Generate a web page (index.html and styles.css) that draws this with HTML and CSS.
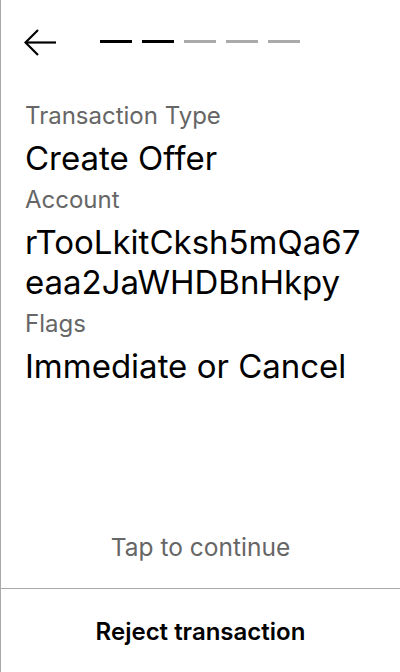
FILE: index.html
```html
<!DOCTYPE html>
<html lang="en">
<head>
<meta charset="utf-8">
<link rel="stylesheet" href="styles.css">
</head>
<body>
<div class="screen">
  <header class="header">
    <button class="back" aria-label="Back">
      <svg width="34" height="28" viewBox="0 0 34 28" fill="none" stroke="#000" stroke-width="2.2">
        <path d="M32 13.5H1.5"/>
        <path d="M14 1L1.5 13.5L14 26"/>
      </svg>
    </button>
    <div class="steps">
      <span class="step done"></span>
      <span class="step done"></span>
      <span class="step"></span>
      <span class="step"></span>
      <span class="step"></span>
    </div>
  </header>
  <main class="content">
    <div class="label">Transaction Type</div>
    <div class="value">Create Offer</div>
    <div class="label">Account</div>
    <div class="value">rTooLkitCksh5mQa67<br>eaa2JaWHDBnHkpy</div>
    <div class="label">Flags</div>
    <div class="value">Immediate or Cancel</div>
  </main>
  <div class="tap">Tap to continue</div>
  <div class="reject">Reject transaction</div>
</div>
</body>
</html>
```
FILE: styles.css
```css
* { box-sizing: border-box; }
html, body { margin: 0; padding: 0; background: #fff; }
body { font-family: Inter, "Noto Sans", sans-serif; color: #000; }
.screen {
  width: 400px;
  height: 672px;
  border-left: 1px solid #aaa;
  display: flex;
  flex-direction: column;
}
.header {
  display: flex;
  align-items: center;
  height: 63px;
  padding: 22px 0 0 23px;
}
.back {
  background: none;
  border: 0;
  padding: 0;
  margin: 0;
  width: 34px;
  height: 28px;
  display: block;
}
.back svg { display: block; }
.steps {
  display: flex;
  gap: 10px;
  margin-left: 42px;
  margin-top: -2px;
}
.step {
  width: 32px;
  height: 3px;
  background: #aaa;
}
.step.done { background: #000; }
.content {
  flex: 1;
  padding: 38px 24px 0 24px;
  display: flex;
  flex-direction: column;
}
.label {
  font-size: 24px;
  line-height: 30px;
  color: #666;
}
.value {
  font-size: 33px;
  line-height: 40px;
  color: #000;
  margin: 7px 0 7px;
}
.tap {
  text-align: center;
  font-size: 24.5px;
  line-height: 30px;
  color: #666;
  padding-bottom: 26px;
}
.reject {
  border-top: 1px solid #aaa;
  height: 84px;
  display: flex;
  align-items: center;
  justify-content: center;
  font-size: 24px;
  font-weight: 600;
  padding-top: 2px;
}
```
